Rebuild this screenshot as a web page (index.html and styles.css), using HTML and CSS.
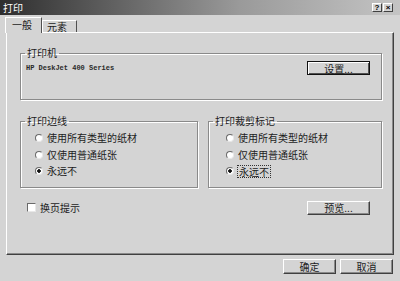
FILE: index.html
```html
<!DOCTYPE html>
<html lang="zh">
  <head>
    <meta charset="UTF-8" />
    <title>打印</title>
    <link rel="stylesheet" href="styles.css">
  </head>
  <body>
    <div class="window">
      <div class="titlebar">
        <span class="title">打印</span>
        <div class="caption">
          <span class="cap">?</span>
          <span class="cap">×</span>
        </div>
      </div>

      <div class="tabs">
        <div class="tab active">一般</div>
        <div class="tab">元素</div>
      </div>

      <div class="panel">
        <fieldset class="group printer">
          <legend>打印机</legend>
          <div class="printer-row">
            <span class="printer-name">HP DeskJet 400 Series</span>
            <button class="btn default">设置...</button>
          </div>
        </fieldset>

        <div class="columns">
          <fieldset class="group">
            <legend>打印边线</legend>
            <div class="options">
              <div class="option"><span class="radio"></span>使用所有类型的纸材</div>
              <div class="option"><span class="radio"></span>仅使用普通纸张</div>
              <div class="option"><span class="radio on"></span>永远不</div>
            </div>
          </fieldset>
          <fieldset class="group">
            <legend>打印裁剪标记</legend>
            <div class="options right">
              <div class="option"><span class="radio"></span>使用所有类型的纸材</div>
              <div class="option"><span class="radio"></span>仅使用普通纸张</div>
              <div class="option"><span class="radio on"></span><span class="focus">永远不</span></div>
            </div>
          </fieldset>
        </div>

        <div class="bottom-row">
          <div class="check"><span class="box"></span>换页提示</div>
          <button class="btn">预览...</button>
        </div>
      </div>

      <div class="actions">
        <button class="btn small">确定</button>
        <button class="btn small">取消</button>
      </div>
    </div>
  </body>
</html>
```

FILE: styles.css
```css
* {
  margin: 0;
  padding: 0;
  box-sizing: border-box;
}

body {
  width: 400px;
  height: 281px;
  background-color: #d4d4d4;
  font-family: "Noto Sans CJK SC", "Liberation Sans", sans-serif;
  font-size: 10px;
  color: #1c1c1c;
  overflow: hidden;
}

.window {
  display: flex;
  flex-direction: column;
  height: 281px;
}

/* title bar */
.titlebar {
  height: 15px;
  display: flex;
  align-items: center;
  justify-content: space-between;
  padding: 0 7px 0 3px;
  background: linear-gradient(to right, #2e2e2e, #9a9a9a 60%, #c4c4c4);
}

.title {
  color: #fff;
  font-size: 10px;
  line-height: 15px;
}

.caption {
  display: flex;
  gap: 1px;
}

.cap {
  width: 10px;
  height: 9px;
  background-color: #d4d4d4;
  border: 1px solid;
  border-color: #fff #404040 #404040 #fff;
  font-family: "Liberation Sans", sans-serif;
  font-size: 8px;
  font-weight: bold;
  line-height: 7px;
  text-align: center;
  color: #000;
}

/* tabs */
.tabs {
  display: flex;
  align-items: flex-end;
  height: 17px;
  padding-left: 5px;
}

.tab {
  height: 12px;
  padding: 0 0 0 4px;
  width: 35px;
  border: 1px solid;
  border-bottom: none;
  border-color: #fff #505050 #fff #fff;
  line-height: 11px;
  font-size: 10px;
}

.tab.active {
  width: 37px;
  height: 16px;
  padding-left: 6px;
  margin-bottom: -1px;
  position: relative;
  z-index: 1;
  background-color: #d4d4d4;
  line-height: 13px;
}

/* tab body */
.panel {
  margin-left: 6px;
  width: 388px;
  height: 223px;
  border: 1px solid;
  border-color: #fff #404040 #404040 #fff;
  box-shadow: inset -1px -1px #8a8a8a;
  padding: 14px 11px 0 13px;
}

.group {
  border: 1px solid #8a8a8a;
  box-shadow: inset 1px 1px #fff, 1px 1px #fff;
  min-width: 0;
}

.group legend {
  margin-left: 4px;
  padding: 0 2px;
  font-size: 10px;
  line-height: 12px;
}

.printer {
  height: 53px;
}

.printer-row {
  display: flex;
  align-items: center;
  justify-content: space-between;
  padding: 2px 11px 0 5px;
}

.printer-name {
  font-family: "Liberation Mono", monospace;
  font-size: 7px;
  font-weight: bold;
  color: #2a2a2a;
}

.btn {
  width: 63px;
  height: 14px;
  background-color: #d4d4d4;
  border: 1px solid;
  border-color: #fff #404040 #404040 #fff;
  box-shadow: inset -1px -1px #8a8a8a;
  font-family: "Noto Sans CJK SC", sans-serif;
  font-size: 10px;
  line-height: 11px;
  color: #1c1c1c;
}

.btn.default {
  border: 1px solid #111;
  box-shadow: inset 1px 1px #fff, inset -1px -1px #505050;
}

.btn.small {
  width: 53px;
  height: 15px;
}

.columns {
  display: grid;
  grid-template-columns: 178px 1fr;
  gap: 10px;
  margin-top: 15px;
}

.columns .group {
  height: 73px;
}

.options {
  padding: 3px 0 0 14px;
}

.options.right {
  padding-left: 17px;
}

.option {
  display: flex;
  align-items: center;
  height: 16.5px;
  gap: 4px;
  line-height: 12px;
}

.radio {
  width: 8px;
  height: 8px;
  border-radius: 50%;
  background-color: #fff;
  border: 1px solid;
  border-color: #6a6a6a #e8e8e8 #e8e8e8 #6a6a6a;
}

.radio.on {
  background: radial-gradient(circle, #111 1.5px, #fff 2.1px);
}

.focus {
  outline: 1px dotted #333;
  padding: 0 1px;
  line-height: 11px;
}

.bottom-row {
  display: flex;
  align-items: center;
  justify-content: space-between;
  margin-top: 12px;
  padding: 0 12px 0 7px;
}

.check {
  display: flex;
  align-items: center;
  gap: 4px;
}

.box {
  width: 9px;
  height: 9px;
  background-color: #fff;
  border: 1px solid;
  border-color: #6a6a6a #e8e8e8 #e8e8e8 #6a6a6a;
}

/* dialog buttons */
.actions {
  display: flex;
  justify-content: flex-end;
  gap: 4px;
  margin-top: 4px;
  padding-right: 7px;
}
```
